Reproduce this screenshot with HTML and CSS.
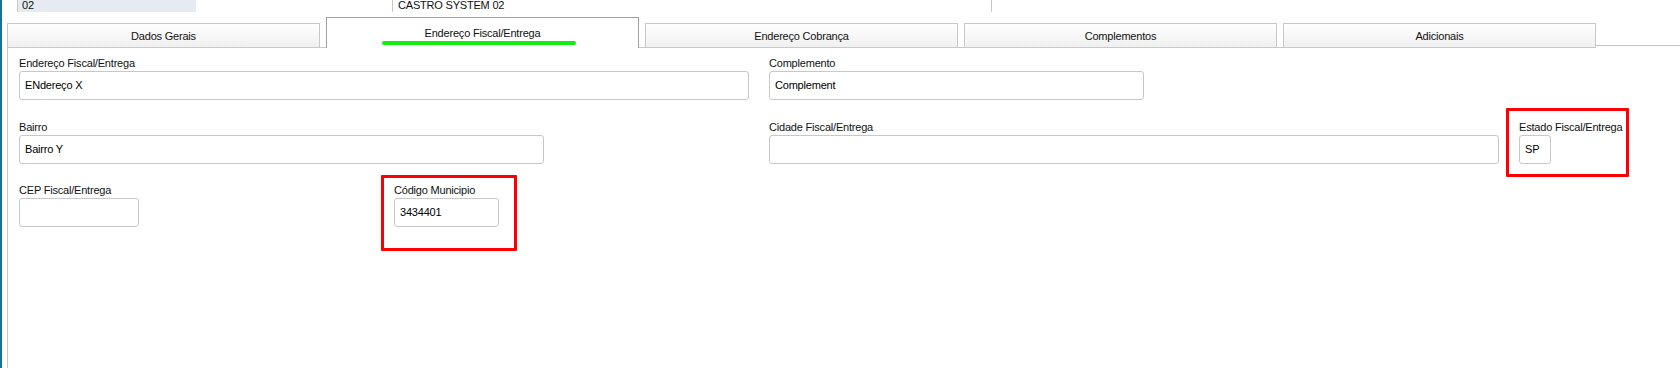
FILE: index.html
```html
<!DOCTYPE html>
<html lang="pt-BR">
<head>
<meta charset="utf-8">
<title>Endereço Fiscal/Entrega</title>
<link rel="stylesheet" href="styles.css">
</head>
<body>
<div class="app">
  <div class="toprow">
    <div class="cell cell-code">02</div>
    <div class="cell cell-name">CASTRO SYSTEM 02</div>
    <div class="cell cell-rest"></div>
  </div>

  <div class="tabbar">
    <div class="tabs">
      <div class="tab">Dados Gerais</div>
      <div class="tab active">Endereço Fiscal/Entrega</div>
      <div class="tab">Endereço Cobrança</div>
      <div class="tab">Complementos</div>
      <div class="tab">Adicionais</div>
    </div>
    <div class="tabfill"></div>
  </div>

  <div class="panel">
    <div class="row">
      <div class="field f-addr">
        <div class="label">Endereço Fiscal/Entrega</div>
        <div class="input">ENdereço X</div>
      </div>
      <div class="field f-compl">
        <div class="label">Complemento</div>
        <div class="input">Complement</div>
      </div>
    </div>
    <div class="row">
      <div class="field f-bairro">
        <div class="label">Bairro</div>
        <div class="input">Bairro Y</div>
      </div>
      <div class="field f-cidade">
        <div class="label">Cidade Fiscal/Entrega</div>
        <div class="input"></div>
      </div>
      <div class="field f-estado mark">
        <div class="label">Estado Fiscal/Entrega</div>
        <div class="input">SP</div>
      </div>
    </div>
    <div class="row">
      <div class="field f-cep">
        <div class="label">CEP Fiscal/Entrega</div>
        <div class="input"></div>
      </div>
      <div class="field f-codigo mark">
        <div class="label">Código Municipio</div>
        <div class="input">3434401</div>
      </div>
    </div>
  </div>
</div>
</body>
</html>
```

FILE: styles.css
```css
html, body {
  margin: 0;
  padding: 0;
  background: #ffffff;
}

body {
  width: 1680px;
  height: 368px;
  overflow: hidden;
  font-family: "Liberation Sans", Arial, sans-serif;
  font-size: 11px;
  letter-spacing: -0.2px;
  color: #111111;
}

.app {
  height: 368px;
  box-sizing: border-box;
  border-left: 2px solid #137591;
}

/* top (cut) grid row */
.toprow {
  display: flex;
  height: 12px;
  overflow: hidden;
}

.cell {
  height: 12px;
  line-height: 10px;
  box-sizing: border-box;
  border-left: 1px solid #c8c8c8;
  white-space: nowrap;
}

.cell-code {
  margin-left: 15px;
  width: 179px;
  padding-left: 4px;
  background: #e6eaf1;
}

.cell-name {
  margin-left: 196px;
  width: 599px;
  padding-left: 5px;
}

.cell-rest {
  flex: 1;
}

/* tabs */
.tabbar {
  display: flex;
  align-items: flex-start;
  margin-top: 5px;
}

.tabs {
  display: flex;
  align-items: flex-end;
  gap: 6px;
  margin-left: 5px;
  height: 30px;
  border-bottom: 1px solid #c8c8c8;
}

.tab {
  width: 313px;
  height: 24px;
  box-sizing: border-box;
  border: 1px solid #c8c8c8;
  border-bottom: none;
  background: linear-gradient(#ffffff, #f0f0f0);
  display: flex;
  align-items: center;
  justify-content: center;
  white-space: nowrap;
}

.tab.active {
  position: relative;
  height: 31px;
  margin-bottom: -1px;
  border-color: #a0a0a0;
  background: #ffffff;
  padding-bottom: 1px;
}

.tab.active::after {
  content: "";
  position: absolute;
  left: 55px;
  top: 23px;
  width: 194px;
  height: 4px;
  border-radius: 2px;
  background: #12ee12;
}

.tabfill {
  flex: 1;
  height: 28px;
  border-bottom: 1px solid #c4c4c4;
}

/* panel */
.panel {
  margin-left: 5px;
  height: 320px;
  box-sizing: border-box;
  border-left: 1px solid #c8c8c8;
  padding: 8px 0 0 11px;
}

.row {
  display: flex;
  align-items: flex-start;
  margin-bottom: 19.5px;
}

.field {
  display: flex;
  flex-direction: column;
  position: relative;
}

.label {
  height: 15px;
  line-height: 15px;
  white-space: nowrap;
}

.input {
  height: 29px;
  box-sizing: border-box;
  border: 1px solid #c8c8c8;
  border-radius: 3px;
  padding: 0 5px;
  line-height: 27px;
  color: #000000;
  white-space: nowrap;
}

.f-addr { width: 730px; }
.f-compl { width: 375px; margin-left: 20px; }
.f-bairro { width: 525px; }
.f-cidade { width: 730px; margin-left: 225px; }
.f-estado { width: 104px; margin-left: 20px; }
.f-estado .input { width: 32px; }
.f-cep { width: 120px; }
.f-codigo { width: 105px; margin-left: 255px; }

/* red annotation frames */
.mark::after {
  content: "";
  position: absolute;
  border: 3px solid #ff0000;
  border-radius: 1px;
  pointer-events: none;
}

.f-estado.mark::after {
  top: -12px;
  left: -13px;
  right: -6px;
  bottom: -13px;
}

.f-codigo.mark::after {
  top: -8px;
  left: -13px;
  right: -18px;
  bottom: -24px;
}
```
